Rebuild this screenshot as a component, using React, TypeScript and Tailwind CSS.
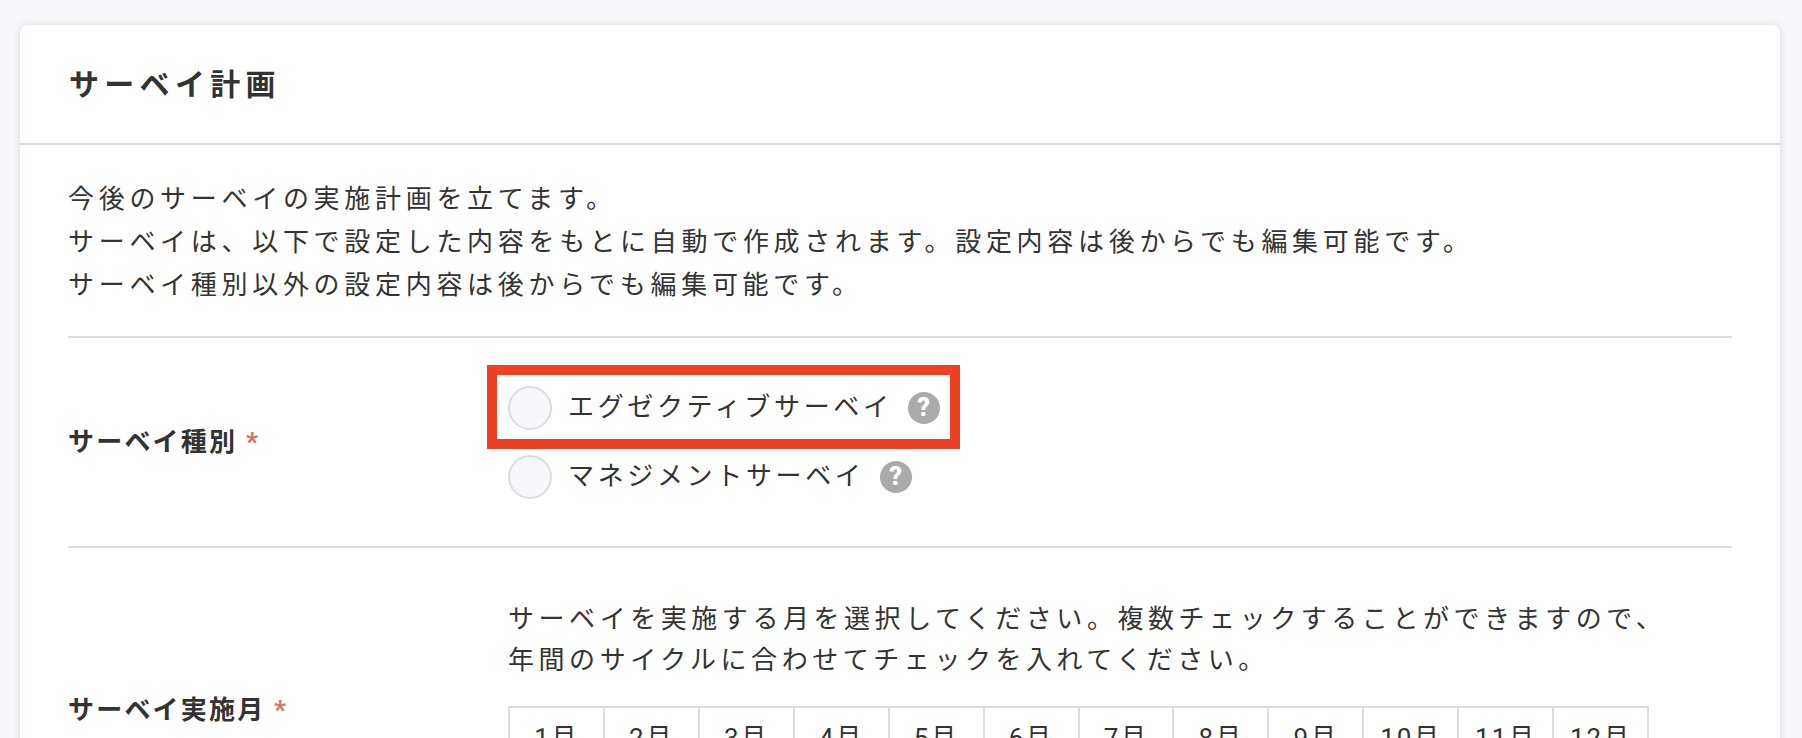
import React from 'react';

const font = { fontFamily: '"Roboto", "Noto Sans CJK JP", sans-serif' };

const months = ['1月', '2月', '3月', '4月', '5月', '6月', '7月', '8月', '9月', '10月', '11月', '12月'];

const HelpIcon = () => (
    <span className="w-8 h-8 rounded-full bg-[#aaaaaa] text-white flex items-center justify-center text-[25px] leading-none font-black tracking-normal shrink-0">?</span>
);

const Radio = () => (
    <span className="w-11 h-11 rounded-full bg-[#f5f7fb] border-2 border-[#dddddd] shrink-0" />
);

const RadioRow: React.FC<{ label: string }> = ({ label }) => (
    <label className="flex items-center h-[69px] tracking-[3.65px]">
        <Radio />
        <span className="ml-[16px] mr-[15px]">{label}</span>
        <HelpIcon />
    </label>
);

export default function App() {
    return (
        <div className="h-[738px] overflow-hidden bg-[#f5f7fb] pt-[25px] pl-[20px] pr-[22px] text-[#333333]" style={font}>
            <div className="bg-white rounded-lg shadow-[0_0_8px_rgba(0,0,0,0.12)] h-[900px] text-[26px] tracking-[4.7px] leading-[43px]">
                <div className="h-[120px] flex items-center px-[49px] border-b-2 border-[#dddddd]">
                    <h1 className="text-[30px] font-bold tracking-[5.3px]">サーベイ計画</h1>
                </div>

                <div className="px-[48px]">
                    <div className="pt-[33px] pb-[29px] border-b-2 border-[#dddddd]">
                        <p>今後のサーベイの実施計画を立てます。</p>
                        <p>サーベイは、以下で設定した内容をもとに自動で作成されます。設定内容は後からでも編集可能です。</p>
                        <p>サーベイ種別以外の設定内容は後からでも編集可能です。</p>
                    </div>

                    <div className="flex items-center h-[210px] border-b-2 border-[#dddddd]">
                        <div className="w-[440px] font-bold tracking-[2.2px]">
                            サーベイ種別 <span className="text-[#d9736f] font-black">*</span>
                        </div>
                        <div className="relative">
                            <RadioRow label="エグゼクティブサーベイ" />
                            <RadioRow label="マネジメントサーベイ" />
                            <div className="absolute left-[-21px] top-[-8px] w-[473px] h-[84px] border-[10px] border-[#ee4023]" />
                        </div>
                    </div>

                    <div className="flex items-center h-[324px]">
                        <div className="w-[440px] font-bold tracking-[2.2px]">
                            サーベイ実施月 <span className="text-[#d9736f] font-black">*</span>
                        </div>
                        <div className="self-start pt-[51px] leading-[41px] tracking-[4.55px]">
                            <p>サーベイを実施する月を選択してください。複数チェックすることができますので、</p>
                            <p>年間のサイクルに合わせてチェックを入れてください。</p>
                            <div className="mt-[25px] flex w-[1141px] border-2 border-[#dddddd] tracking-[2px]">
                                {months.map((m, i) => (
                                    <div key={m} className={`flex-1 text-center py-[10px] ${i > 0 ? 'border-l-2 border-[#dddddd]' : ''}`}>
                                        {m}
                                    </div>
                                ))}
                            </div>
                        </div>
                    </div>
                </div>
            </div>
        </div>
    );
}
